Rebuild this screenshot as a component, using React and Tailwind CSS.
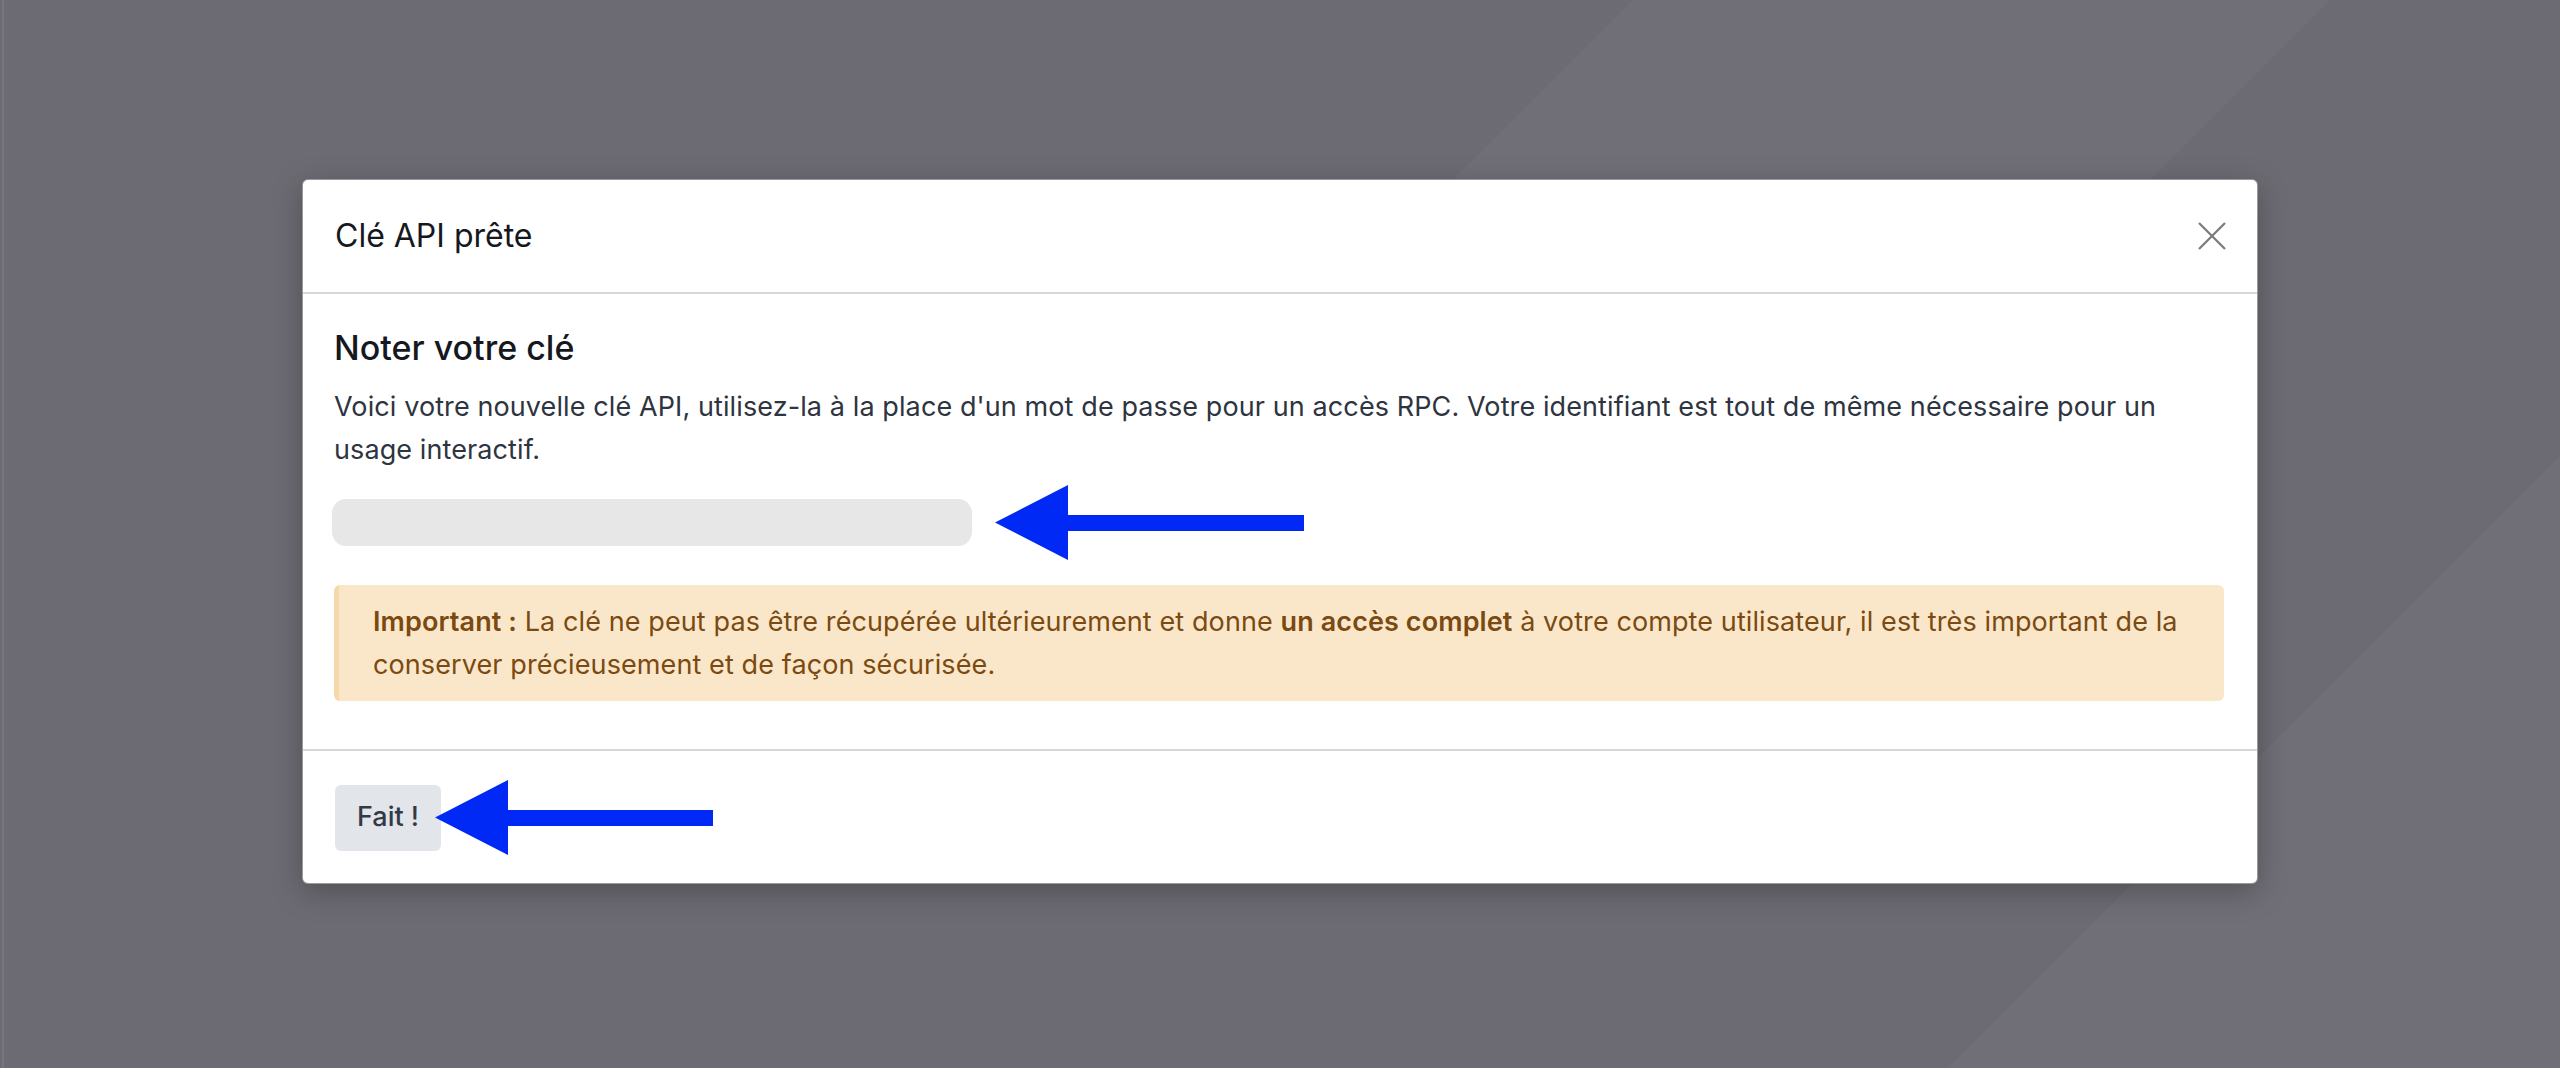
import React from "react";

const FONT = { fontFamily: "Inter, 'Noto Sans', sans-serif" };

// blue annotation arrow pointing left
const LeftArrow = ({ width, className }) => (
  <svg
    width={width}
    height="75"
    viewBox={`0 0 ${width} 75`}
    className={className}
  >
    <path
      d={`M0 37.5 L73 0 L73 30 L${width} 30 L${width} 46 L73 46 L73 75 Z`}
      fill="#0129f6"
    />
  </svg>
);

const Backdrop = () => (
  <svg
    className="absolute inset-0"
    width="2560"
    height="1068"
    viewBox="0 0 2560 1068"
  >
    <polygon points="1633,0 2330,0 1446,884 749,884" fill="#ffffff" fillOpacity="0.03" />
    <polygon points="2560,456 2560,1068 1948,1068" fill="#ffffff" fillOpacity="0.03" />
  </svg>
);

export default function App() {
  return (
    <div
      className="relative w-full h-[1068px] overflow-hidden bg-[#6c6b73]"
      style={FONT}
    >
      <Backdrop />
      <div className="absolute left-[2px] top-0 h-full w-[2px] bg-[#77767d]" />

      <div className="relative flex justify-center pt-[179px]">
        <div className="w-[1956px] bg-white rounded-[6px] border border-black/40 shadow-[0_8px_30px_rgba(0,0,0,0.25)] overflow-hidden">
          {/* header */}
          <div className="h-[114px] flex items-center justify-between pl-[32px] pr-[31px] border-b-2 border-[#d6d6db]">
            <h1 className="text-[32px] leading-[40px] text-[#15181e]">
              Clé API prête
            </h1>
            <button className="w-[28px] h-[28px] flex items-center justify-center">
              <svg width="28" height="28" viewBox="0 0 28 28">
                <path
                  d="M1 1 L27 27 M27 1 L1 27"
                  stroke="#7a7a7a"
                  strokeWidth="2.2"
                  fill="none"
                />
              </svg>
            </button>
          </div>

          {/* body */}
          <div className="pl-[31px] pr-[33px] pt-[34px] pb-[48px]">
            <h2 className="text-[34px] leading-[39px] font-medium text-[#15181e]">
              Noter votre clé
            </h2>
            <p className="mt-[18px] text-[27px] tracking-[0.1px] leading-[43px] text-[#2e3440]">
              Voici votre nouvelle clé API, utilisez-la à la place d'un mot de
              passe pour un accès RPC. Votre identifiant est tout de même
              nécessaire pour un usage interactif.
            </p>

            <div className="mt-[14px] flex items-center gap-[23px] -ml-[2px]">
              <div className="w-[640px] h-[47px] rounded-[14px] bg-[#e7e7e7]" />
              <LeftArrow width={309} />
            </div>

            <div className="mt-[25px] rounded-[6px] border-l-[5px] border-[#f6d9a8] bg-[#fae7c9] pl-[34px] pr-[20px] py-[15px] text-[27px] tracking-[0.1px] leading-[43px] text-[#7b4a12]">
              <span className="font-semibold">Important :</span> La clé ne peut
              pas être récupérée ultérieurement et donne{" "}
              <span className="font-semibold">un accès complet</span> à votre
              compte utilisateur, il est très important de la conserver
              précieusement et de façon sécurisée.
            </div>
          </div>

          {/* footer */}
          <div className="border-t-2 border-[#d6d6db] pl-[32px] pt-[29px] pb-[28px] flex items-center">
            <button className="h-[66px] px-[22px] rounded-[6px] bg-[#e2e5ea] text-[27px] font-medium text-[#333a46]">
              Fait !
            </button>
            <LeftArrow width={278} className="-ml-[6px]" />
          </div>
        </div>
      </div>
    </div>
  );
}
